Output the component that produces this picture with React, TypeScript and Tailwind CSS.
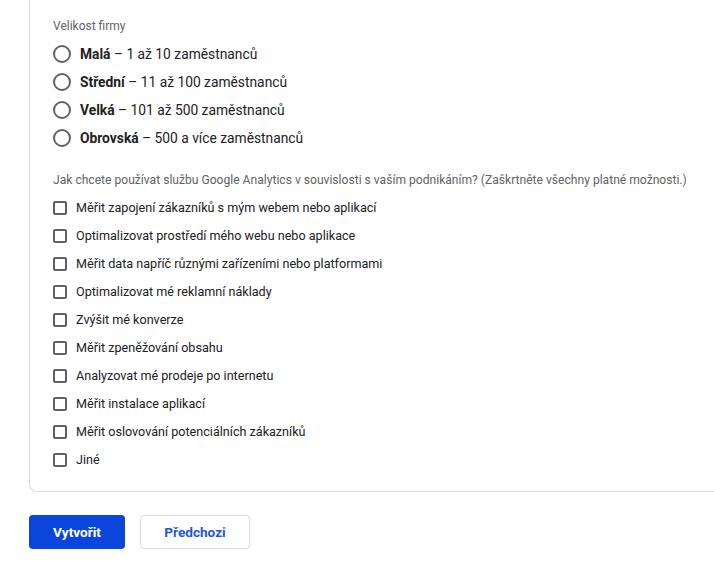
import { useState } from "react";

const sizes = [
  { name: "Malá", desc: "1 až 10 zaměstnanců" },
  { name: "Střední", desc: "11 až 100 zaměstnanců" },
  { name: "Velká", desc: "101 až 500 zaměstnanců" },
  { name: "Obrovská", desc: "500 a více zaměstnanců" },
];

const uses = [
  "Měřit zapojení zákazníků s mým webem nebo aplikací",
  "Optimalizovat prostředí mého webu nebo aplikace",
  "Měřit data napříč různými zařízeními nebo platformami",
  "Optimalizovat mé reklamní náklady",
  "Zvýšit mé konverze",
  "Měřit zpeněžování obsahu",
  "Analyzovat mé prodeje po internetu",
  "Měřit instalace aplikací",
  "Měřit oslovování potenciálních zákazníků",
  "Jiné",
];

const App = () => {
  const [size, setSize] = useState<number | null>(null);
  const [checked, setChecked] = useState<boolean[]>(uses.map(() => false));

  return (
    <div
      className="w-[714px] h-[564px] overflow-hidden bg-white text-[#202124]"
      style={{ fontFamily: "Roboto, 'Liberation Sans', sans-serif" }}
    >
      <div className="ml-[29px] w-[720px] border-x border-b border-[#dadce0] rounded-b-lg pl-[23px] pt-3 pb-[17px]">
        <div className="h-7 flex items-center text-[12px] text-[#5f6368]">Velikost firmy</div>
        {sizes.map((s, i) => (
          <label key={s.name} className="h-7 flex items-center cursor-pointer" onClick={() => setSize(i)}>
            <span className="w-[18px] h-[18px] rounded-full border-2 border-[#5f6368] flex items-center justify-center">
              {size === i && <span className="w-2 h-2 rounded-full bg-[#1a73e8]" />}
            </span>
            <span className="ml-[9px] text-[13.8px]">
              <b className="font-bold">{s.name}</b> – {s.desc}
            </span>
          </label>
        ))}
        <div className="mt-[15px] h-[27px] flex items-center text-[12.1px] text-[#5f6368]">
          Jak chcete používat službu Google Analytics v souvislosti s vaším podnikáním? (Zaškrtněte všechny platné možnosti.)
        </div>
        {uses.map((u, i) => (
          <label
            key={u}
            className="h-7 flex items-center cursor-pointer"
            onClick={() => setChecked(checked.map((c, k) => (k === i ? !c : c)))}
          >
            <span className="w-[14px] h-[14px] rounded-[2px] border-2 border-[#5f6368] flex items-center justify-center">
              {checked[i] && <span className="w-1.5 h-1.5 bg-[#1a73e8]" />}
            </span>
            <span className="ml-[9px] text-[12.6px]">{u}</span>
          </label>
        ))}
      </div>
      <div className="ml-[29px] mt-[23px] flex gap-[15px]">
        <button className="w-[96px] h-[34px] rounded bg-[#0a45dc] text-white text-[13.6px] font-bold">Vytvořit</button>
        <button className="w-[110px] h-[34px] rounded border border-[#dadce0] bg-white text-[#1a5ae0] text-[13.6px] font-bold">
          Předchozi
        </button>
      </div>
    </div>
  );
};

export default App;
